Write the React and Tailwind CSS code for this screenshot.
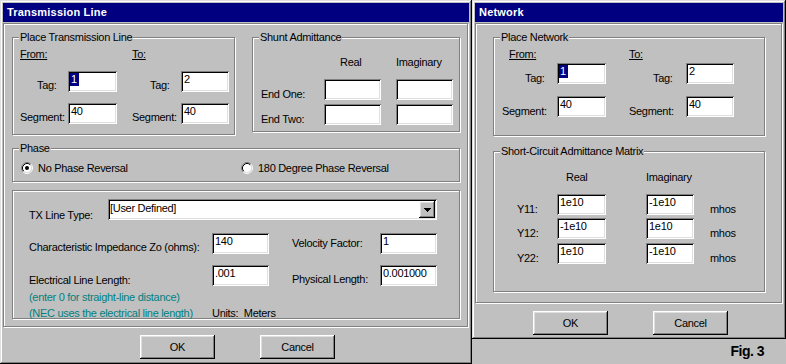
import React from "react";

const SUNKEN =
  "shadow-[inset_1px_1px_0_#808080,inset_-1px_-1px_0_#fff,inset_2px_2px_0_#000,inset_-2px_-2px_0_#dfdfdf]";
const BTN =
  "shadow-[inset_-1px_-1px_0_#000,inset_1px_1px_0_#fff,inset_-2px_-2px_0_#808080,inset_2px_2px_0_#dfdfdf]";
const ETCH = "border border-[#808080] shadow-[inset_1px_1px_0_#fff,1px_1px_0_#fff]";

function Field({ className = "", value, selected }) {
  return (
    <div className={`h-[21px] shrink-0 bg-white pl-[3px] pt-[2px] whitespace-nowrap ${SUNKEN} ${className}`}>
      {selected ? (
        <span className="inline-block bg-[#000080] text-white -ml-[1px] pl-[1px] pr-[2px]">{value}</span>
      ) : (
        value
      )}
    </div>
  );
}

function Group({ legend, className = "", children }) {
  return (
    <fieldset className={`${ETCH} min-w-0 ${className}`}>
      <legend className="ml-[6px] px-[1px] bg-[#c0c0c0]">{legend}</legend>
      {children}
    </fieldset>
  );
}

function Radio({ checked }) {
  return (
    <svg width="12" height="12" viewBox="0 0 12 12" className="shrink-0">
      <circle cx="6" cy="6" r="4.5" fill="#fff" />
      <path d="M2.11 9.89A5.5 5.5 0 0 1 9.89 2.11" stroke="#808080" strokeWidth="1" fill="none" />
      <path d="M9.89 2.11A5.5 5.5 0 0 1 2.11 9.89" stroke="#fff" strokeWidth="1" fill="none" />
      <path d="M2.82 9.18A4.5 4.5 0 0 1 9.18 2.82" stroke="#000" strokeWidth="1" fill="none" />
      <path d="M9.18 2.82A4.5 4.5 0 0 1 2.82 9.18" stroke="#dfdfdf" strokeWidth="1" fill="none" />
      {checked && <circle cx="6" cy="6" r="2" fill="#000" />}
    </svg>
  );
}

function Button({ children }) {
  return (
    <div className={`w-[75px] h-[24px] shrink-0 flex items-center justify-center ${BTN}`}>{children}</div>
  );
}

function Win({ title, className = "", children }) {
  return (
    <div
      className={`flex flex-col p-[3px] bg-[#c0c0c0] shadow-[inset_-1px_-1px_0_#000,inset_1px_1px_0_#dfdfdf,inset_-2px_-2px_0_#808080,inset_2px_2px_0_#fff] ${className}`}
    >
      <div className="h-[19px] shrink-0 bg-[#000080] pl-[4px] text-white font-bold leading-[19px] tracking-[0.2px]">
        {title}
      </div>
      {children}
    </div>
  );
}

function Combo() {
  return (
    <div className={`w-[329px] h-[21px] shrink-0 bg-white p-[2px] flex ${SUNKEN}`}>
      <span className="flex-1 pt-[1px]">[User Defined]</span>
      <div className={`w-[16px] h-[17px] bg-[#c0c0c0] flex items-center justify-center ${BTN}`}>
        <svg width="7" height="4" viewBox="0 0 7 4" shapeRendering="crispEdges">
          <rect x="0" y="0" width="7" height="1" fill="#000" />
          <rect x="1" y="1" width="5" height="1" fill="#000" />
          <rect x="2" y="2" width="3" height="1" fill="#000" />
          <rect x="3" y="3" width="1" height="1" fill="#000" />
        </svg>
      </div>
    </div>
  );
}

export default function App() {
  return (
    <div className="flex w-[786px] h-[364px] overflow-hidden bg-[#c0c0c0] text-black text-[11px] leading-[13px] tracking-[-0.3px] font-['Liberation_Sans',Arial,sans-serif]">
      {/* Transmission Line dialog */}
      <Win title="Transmission Line" className="w-[472px] h-[364px] shrink-0">
        <div className={`mt-[1px] w-[465px] h-[304px] pl-[8px] pt-[7px] flex flex-col items-start ${ETCH}`}>
          <div className="flex items-start gap-[17px]">
            <Group legend="Place Transmission Line" className="w-[223px]">
              <div className="pl-[7px] pt-[4px] pb-[10px]">
                <div className="flex">
                  <span className="w-[112px] underline">From:</span>
                  <span className="underline">To:</span>
                </div>
                <div className="flex mt-[10px]">
                  <div className="flex w-[112px]">
                    <span className="w-[48px] pl-[17px] pt-[8px]">Tag:</span>
                    <Field className="w-[49px]" value="1" selected />
                  </div>
                  <div className="flex">
                    <span className="w-[49px] pl-[18px] pt-[8px]">Tag:</span>
                    <Field className="w-[48px]" value="2" />
                  </div>
                </div>
                <div className="flex mt-[11px]">
                  <div className="flex w-[112px]">
                    <span className="w-[48px] pt-[8px]">Segment:</span>
                    <Field className="w-[49px]" value="40" />
                  </div>
                  <div className="flex">
                    <span className="w-[49px] pt-[8px]">Segment:</span>
                    <Field className="w-[48px]" value="40" />
                  </div>
                </div>
              </div>
            </Group>
            <Group legend="Shunt Admittance" className="w-[208px]">
              <div className="pl-[8px] pt-[12px] pb-[5px]">
                <div className="flex">
                  <span className="w-[63px]" />
                  <span className="w-[57px] pl-[16px]">Real</span>
                  <span className="ml-[15px]">Imaginary</span>
                </div>
                <div className="flex mt-[10px]">
                  <span className="w-[63px] pt-[9px]">End One:</span>
                  <Field className="w-[57px]" />
                  <Field className="w-[57px] ml-[15px]" />
                </div>
                <div className="flex mt-[3px]">
                  <span className="w-[63px] pt-[9px]">End Two:</span>
                  <Field className="w-[57px]" />
                  <Field className="w-[57px] ml-[15px]" />
                </div>
              </div>
            </Group>
          </div>

          <Group legend="Phase" className="w-[448px] mt-[7px]">
            <div className="flex pl-[8px] pt-[7px] pb-[6px]">
              <div className="flex w-[220px]">
                <Radio checked />
                <span className="ml-[5px]">No Phase Reversal</span>
              </div>
              <div className="flex">
                <Radio />
                <span className="ml-[5px]">180 Degree Phase Reversal</span>
              </div>
            </div>
          </Group>

          <div className={`w-[448px] h-[129px] mt-[8px] pl-[16px] pt-[8px] ${ETCH}`}>
            <div className="flex">
              <span className="w-[79px] pt-[10px]">TX Line Type:</span>
              <Combo />
            </div>
            <div className="flex mt-[11px]">
              <span className="w-[183px] pt-[8px]">Characteristic Impedance Zo (ohms):</span>
              <Field className="w-[57px]" value="140" />
              <span className="w-[88px] ml-[23px] pt-[4px]">Velocity Factor:</span>
              <Field className="w-[57px]" value="1" />
            </div>
            <div className="flex mt-[11px]">
              <span className="w-[183px] pt-[9px]">Electrical Line Length:</span>
              <Field className="w-[57px]" value=".001" />
              <span className="w-[88px] ml-[23px] pt-[8px]">Physical Length:</span>
              <Field className="w-[57px]" value="0.001000" />
            </div>
            <div className="mt-[4px] text-[#008080]">(enter 0 for straight-line distance)</div>
            <div className="flex mt-[3px]">
              <span className="w-[183px] text-[#008080]">(NEC uses the electrical line length)</span>
              <span className="whitespace-pre">Units:  Meters</span>
            </div>
          </div>
        </div>
        <div className="flex mt-[8px] pl-[137px] gap-[45px]">
          <Button>OK</Button>
          <Button>Cancel</Button>
        </div>
      </Win>

      {/* Network dialog */}
      <div className="flex flex-col w-[314px] shrink-0">
        <Win title="Network" className="w-[314px] h-[339px] shrink-0">
          <div className={`mt-[1px] w-[307px] h-[280px] pl-[17px] pt-[7px] flex flex-col items-start ${ETCH}`}>
            <Group legend="Place Network" className="w-[272px]">
              <div className="pl-[8px] pt-[4px] pb-[17px]">
                <div className="flex">
                  <span className="w-[127px] pl-[7px] underline">From:</span>
                  <span className="underline">To:</span>
                </div>
                <div className="flex mt-[2px]">
                  <div className="flex w-[127px]">
                    <span className="w-[55px] pl-[23px] pt-[9px]">Tag:</span>
                    <Field className="w-[49px]" value="1" selected />
                  </div>
                  <div className="flex">
                    <span className="w-[57px] pl-[24px] pt-[9px]">Tag:</span>
                    <Field className="w-[48px]" value="2" />
                  </div>
                </div>
                <div className="flex mt-[11px]">
                  <div className="flex w-[127px]">
                    <span className="w-[55px] pt-[9px]">Segment:</span>
                    <Field className="w-[49px]" value="40" />
                  </div>
                  <div className="flex">
                    <span className="w-[57px] pt-[9px]">Segment:</span>
                    <Field className="w-[48px]" value="40" />
                  </div>
                </div>
              </div>
            </Group>

            <Group legend="Short-Circuit Admittance Matrix" className="w-[272px] mt-[9px]">
              <div className="pl-[23px] pt-[13px] pb-[26px]">
                <div className="flex">
                  <span className="w-[40px]" />
                  <span className="w-[49px] pl-[9px]">Real</span>
                  <span className="ml-[40px]">Imaginary</span>
                </div>
                <div className="flex mt-[10px]">
                  <span className="w-[40px] pt-[9px]">Y11:</span>
                  <Field className="w-[49px]" value="1e10" />
                  <Field className="w-[48px] ml-[40px]" value="-1e10" />
                  <span className="ml-[16px] pt-[9px]">mhos</span>
                </div>
                <div className="flex mt-[2px]">
                  <span className="w-[40px] pt-[9px]">Y12:</span>
                  <Field className="w-[49px]" value="-1e10" />
                  <Field className="w-[48px] ml-[40px]" value="1e10" />
                  <span className="ml-[16px] pt-[9px]">mhos</span>
                </div>
                <div className="flex mt-[3px]">
                  <span className="w-[40px] pt-[9px]">Y22:</span>
                  <Field className="w-[49px]" value="1e10" />
                  <Field className="w-[48px] ml-[40px]" value="-1e10" />
                  <span className="ml-[16px] pt-[9px]">mhos</span>
                </div>
              </div>
            </Group>
          </div>
          <div className="flex mt-[8px] pl-[58px] gap-[45px]">
            <Button>OK</Button>
            <Button>Cancel</Button>
          </div>
        </Win>
        <div className="flex-1 flex justify-end pr-[22px] font-bold text-[14px] leading-[25px] tracking-[-0.5px]">
          Fig. 3
        </div>
      </div>
    </div>
  );
}
